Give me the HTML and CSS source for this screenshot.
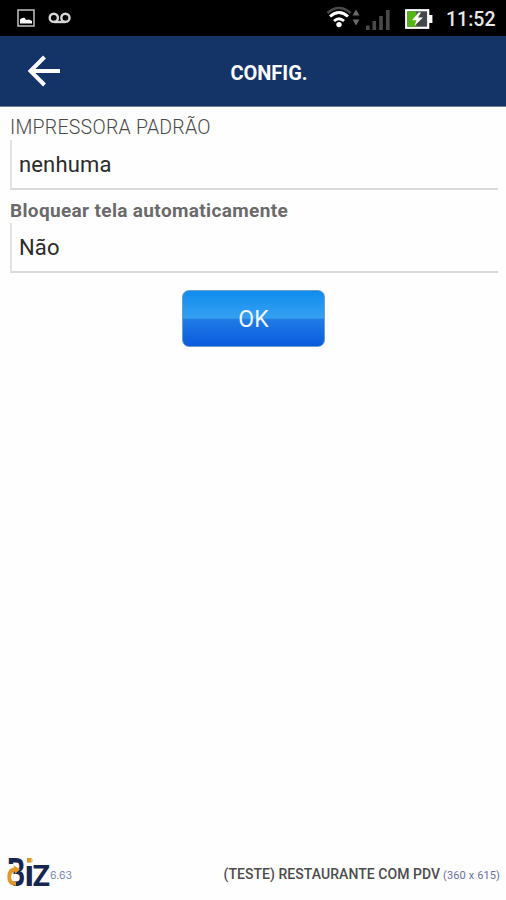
FILE: index.html
```
<!DOCTYPE html>
<html lang="pt-BR">
<head>
    <meta charset="UTF-8">
    <meta name="viewport" content="width=device-width, initial-scale=1.0">
    <title>Config.</title>
    <link rel="stylesheet" href="styles.css">
</head>
<body>
    <!-- Barra de status -->
    <div class="status-bar">
        <svg class="icon-picture" width="18" height="18" viewBox="0 0 18 18">
            <rect x="1" y="1" width="16" height="16" fill="#000" stroke="#b5b5b5" stroke-width="1.6"/>
            <path d="M3 14.5V10.5L5 9L7.5 8.8L9 11L12 10.5L15 12V14.5Z" fill="#fff"/>
        </svg>
        <svg class="icon-voicemail" width="24" height="12" viewBox="0 0 24 12">
            <g fill="none" stroke="#d8d8d8" stroke-width="2.4">
                <circle cx="5.8" cy="5.8" r="4.1"/>
                <circle cx="17.4" cy="5.8" r="4.1"/>
                <path d="M6 10H17.4"/>
            </g>
        </svg>
        <svg class="icon-network" width="66" height="26" viewBox="0 0 66 26">
            <g fill="none">
                <path d="M1.5 7Q13 -3 24.5 7" stroke="#4a4a4a" stroke-width="2.6"/>
                <path d="M4 10.5Q13 2.5 22 10.5" stroke="#fff" stroke-width="3"/>
                <path d="M8 15Q13 10.5 18 15" stroke="#fff" stroke-width="2.8"/>
            </g>
            <circle cx="13" cy="18.6" r="2.7" fill="#fff"/>
            <path d="M26.5 9.5L30 3.5L33.5 9.5ZM26.5 13.5L30 19.5L33.5 13.5Z" fill="#6a6a6a"/>
            <g fill="#4a4a4a">
                <rect x="40" y="19.5" width="3.6" height="4.5"/>
                <rect x="46.5" y="15" width="3.6" height="9"/>
                <rect x="53.2" y="10" width="3.6" height="14"/>
                <rect x="60" y="4" width="3.6" height="20"/>
            </g>
        </svg>
        <svg class="icon-battery" width="28" height="20" viewBox="0 0 28 20">
            <rect x="24" y="6" width="3.4" height="8" fill="#fff"/>
            <rect x="1.2" y="1.2" width="22" height="17.6" fill="#44484a" stroke="#fff" stroke-width="2.2"/>
            <rect x="2.4" y="2.4" width="9" height="15.2" fill="#55b512"/>
            <path d="M13.5 3.5L7 11.2H11.5L9.5 16.8L18 8.5H13L16 3.5Z" fill="#fff"/>
        </svg>
        <span class="clock">11:52</span>
    </div>

    <div class="header">
        <svg class="back" width="34" height="32" viewBox="0 0 34 32">
            <path d="M33 16H4M17.5 2L3.5 16L17.5 30" fill="none" stroke="#fff" stroke-width="4"/>
        </svg>
        <h1 class="title">CONFIG.</h1>
    </div>

    <div class="content">
        <div class="label label-printer">IMPRESSORA PADRÃO</div>
        <div class="field"><span class="value-printer">nenhuma</span></div>
        <div class="label label-lock">Bloquear tela automaticamente</div>
        <div class="field"><span class="value-lock">Não</span></div>
        <button class="ok-btn">OK</button>
    </div>

    <div class="footer">
        <svg class="logo" width="42" height="30" viewBox="0 0 42 30">
            <g class="logo-text">
                <text transform="translate(-1 28.5) scale(.75 1)" font-size="38">B</text>
                <text x="16.6" y="28.5"><tspan font-size="36">i</tspan><tspan font-size="29" dx="-1.6">Z</tspan></text>
            </g>
            <rect x="-1" y="7" width="6.5" height="22" fill="#fefefe"/>
            <path d="M7.5 12.5Q1.2 12.5 1.2 20Q1.2 26.8 8 26.8" fill="none" stroke="#e0972a" stroke-width="3.8"/>
            <path d="M6 8.5L12 12.5L7 17Z" fill="#e0972a"/>
            <rect x="18" y="0" width="6" height="6.6" fill="#fefefe"/>
            <rect x="19" y="1" width="4.6" height="4.6" fill="#e0972a"/>
        </svg>
        <span class="version">6.63</span>
        <span class="company">(TESTE) RESTAURANTE COM PDV</span>
        <span class="screen-size">(360 x 615)</span>
    </div>
</body>
</html>
```
FILE: styles.css
```
* {
    box-sizing: border-box;
}
body {
    margin: 0;
    height: 900px;
    display: flex;
    flex-direction: column;
    background-color: #fefefe;
    font-family: Roboto, "Liberation Sans", sans-serif;
    overflow: hidden;
}
.status-bar {
    height: 36px;
    display: flex;
    align-items: center;
    background-color: #000;
    padding: 0 11px 0 17px;
}
.icon-voicemail {
    margin-left: 13px;
    margin-top: -1px;
}
.icon-network {
    margin-left: auto;
    margin-top: 2px;
}
.icon-battery {
    margin-left: 13px;
    margin-top: 1px;
}
.clock {
    width: 49px;
    margin-left: 13px;
    margin-top: 2px;
    color: #e8e8e8;
    font-size: 19.5px;
    font-weight: 500;
    white-space: nowrap;
}
.header {
    height: 71px;
    display: grid;
    grid-template-columns: 84px 1fr 84px;
    align-items: center;
    background-color: #143468;
    border-bottom: 1px solid #6c7f92;
}
.back {
    margin-left: 27px;
}
.title {
    margin: 3px 0 0 32px;
    text-align: center;
    color: #fff;
    font-size: 20px;
    font-weight: 700;
}
.content {
    flex: 1;
    display: flex;
    flex-direction: column;
    padding: 9px 8px 0 10px;
}
.label {
    height: 24px;
    line-height: 24px;
    color: #6a6a6a;
    white-space: nowrap;
}
.label-printer {
    color: #4a4a4a;
    font-size: 19.5px;
    font-weight: 300;
    letter-spacing: 0.25px;
}
.label-lock {
    font-size: 19px;
    font-weight: 700;
    letter-spacing: 0.35px;
    margin-top: 9px;
}
.field {
    height: 50px;
    padding-left: 7px;
    line-height: 50px;
    border-left: 2px solid #e2e2e2;
    border-bottom: 2px solid #dadada;
    color: #2b2b2b;
    font-size: 22px;
    letter-spacing: 0.15px;
}
.ok-btn {
    width: 143px;
    height: 57px;
    margin: 17px 0 0 172px;
    padding: 2px 0 0;
    border: 1px solid #6f9fc8;
    border-radius: 7px;
    background: linear-gradient(#0f8cee 0%, #36a0f2 49%, #1f7be6 52%, #0a5bdd 100%);
    color: #f0f6ff;
    font-family: inherit;
    font-size: 23px;
}
.footer {
    height: 44px;
    display: flex;
    align-items: flex-start;
    padding: 0 6px 0 8px;
    white-space: nowrap;
}
.logo {
    margin-top: 1px;
    overflow: visible;
}
.logo-text {
    fill: #17264f;
    font-family: Roboto, sans-serif;
    font-weight: 700;
}
.version {
    margin-top: 13px;
    color: #7a86b0;
    font-family: Inter, sans-serif;
    font-size: 10.5px;
}
.company {
    margin-left: auto;
    margin-top: 10px;
    color: #4c4c4c;
    font-size: 14px;
    font-weight: 500;
    letter-spacing: 0.05px;
}
.screen-size {
    margin-left: 3px;
    margin-top: 13px;
    color: #6a709c;
    font-size: 11px;
    letter-spacing: 0.12px;
}
```
